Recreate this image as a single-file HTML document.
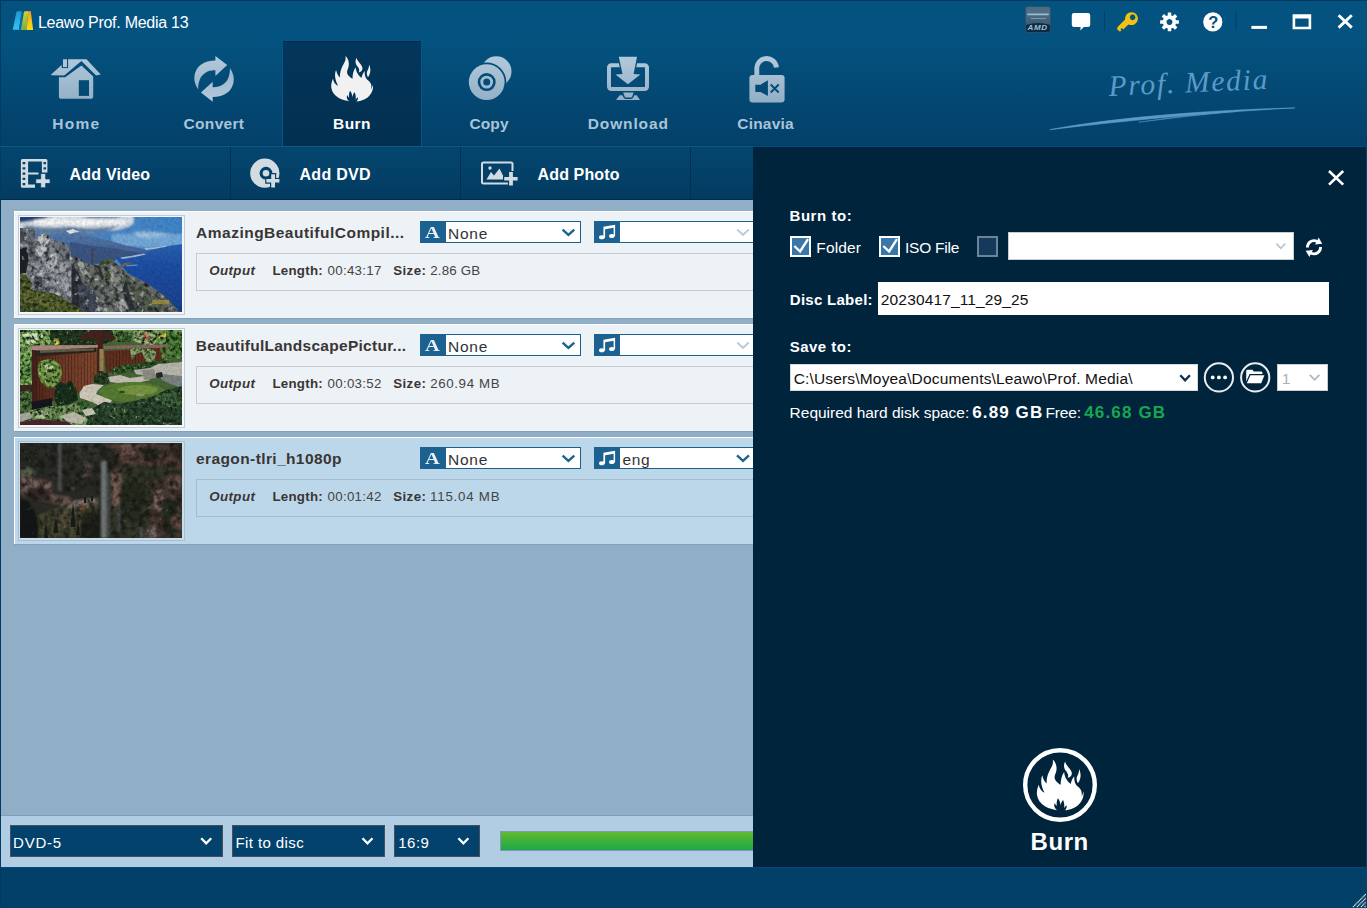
<!DOCTYPE html>
<html lang="en">
<head>
<meta charset="utf-8">
<title>Leawo Prof. Media 13</title>
<style>
*{box-sizing:border-box;margin:0;padding:0}
html,body{width:1367px;height:908px;overflow:hidden;background:#024069}
body{position:relative;font-family:"Liberation Sans",sans-serif;color:#fff;-webkit-font-smoothing:antialiased}
.abs{position:absolute}
.t{position:absolute;white-space:nowrap;line-height:1}
.b{font-weight:bold}
#top{left:0;top:0;width:1367px;height:147px;background:linear-gradient(#04527f 0,#04527f 40px,#034069 146px)}
#burntab{left:283px;top:41px;width:138px;height:105px;background:linear-gradient(#03375b,#022f50);border-top:1px solid #022a47;box-shadow:-1px 0 0 #05558a,1px 0 0 #05558a,0 -1px 0 #05558a}
#toolbar{left:0;top:147px;width:753px;height:53px;background:linear-gradient(#04466f,#033b61)}
.sep{position:absolute;top:147px;width:1px;height:52px;background:#02304f}
#list{left:1px;top:200px;width:752px;height:616px;background:#90aec5}
.card{position:absolute;left:14px;width:739px;height:107px;background:#edf2f6;border-left:1px solid #fff;border-top:1px solid #fff;box-shadow:0 1px 0 #7fa2bd}
.card.sel{background:#bdd7ea}
#bbar{left:1px;top:815px;width:752px;height:52px;background:#b1cde3;border-top:1px solid #7f9db5}
#panel{left:753px;top:147px;width:614px;height:720px;background:#01243d}
#status{left:0;top:867px;width:1367px;height:41px;background:#024069}
.dsel{position:absolute;top:825px;height:32px;background:#02426c;border:1px solid #4a4e58}
.navl{color:#a9c4d8;font-weight:bold;font-size:15px}

.thumbf{position:absolute;left:18px;width:167px;height:100px;background:#f4f7f9;border:1px solid #c3ccd3}
.info{position:absolute;left:196px;width:557px;height:38px;border:1px solid #c6ccd1;border-right:0}
.sub{position:absolute;left:420px;width:161px;height:22px;background:#fff;border:1px solid #1b6290}
.sub i,.aud i{position:absolute;left:0;top:0;width:25px;height:20px;background:#1b6290}
.aud{position:absolute;left:594px;width:159px;height:22px;background:#fff;border:1px solid #1b6290;border-right:0}
.chk{position:absolute;width:21px;height:21px;border:2px solid #fff;background:#3977a8}
.chk.off{border-color:#6c8497;background:#14395a}
</style>
</head>
<body>
<div id="top" class="abs"></div>
<div id="burntab" class="abs"></div>
<div id="toolbar" class="abs"></div>
<div class="sep" style="left:230px"></div><div class="sep" style="left:460px"></div><div class="sep" style="left:690px"></div>
<div id="list" class="abs"></div>
<div class="card" style="top:211px"></div>
<div class="card" style="top:324px"></div>
<div class="card sel" style="top:437px"></div>
<div id="bbar" class="abs"></div>
<div id="status" class="abs"></div>
<div id="panel" class="abs"></div>

<!-- window edge lines -->
<div class="abs" style="left:0;top:0;width:1367px;height:1px;background:#023b61"></div>
<div class="abs" style="left:0;top:0;width:1px;height:908px;background:#023b61"></div>
<div class="abs" style="left:0;top:146px;width:753px;height:1px;background:#0b5883"></div>
<div class="abs" style="left:753px;top:146px;width:614px;height:1px;background:#07497a"></div>
<div class="abs" style="left:0;top:199px;width:753px;height:1px;background:#012b48"></div>

<!-- card 1 -->
<div class="thumbf" style="top:215px"></div>
<div class="info" style="top:253px"></div>
<div class="sub" style="top:221px"><i></i></div>
<div class="aud" style="top:221px"><i></i></div>
<!-- card 2 -->
<div class="thumbf" style="top:328px"></div>
<div class="info" style="top:366px"></div>
<div class="sub" style="top:334px"><i></i></div>
<div class="aud" style="top:334px"><i></i></div>
<!-- card 3 -->
<div class="thumbf" style="top:441px;background:#c9ddec;border-color:#a9bfd0"></div>
<div class="info" style="top:479px;border-color:#a4bccd"></div>
<div class="sub" style="top:447px"><i></i></div>
<div class="aud" style="top:447px"><i></i></div>

<!-- bottom selects -->
<div class="dsel" style="left:10px;width:213px"></div>
<div class="dsel" style="left:232px;width:153px"></div>
<div class="dsel" style="left:394px;width:86px"></div>
<div class="abs" style="left:500px;top:831px;width:253px;height:20px;background:linear-gradient(#62bb30,#3cb13a 50%,#1da84b);border:1px solid #8496bd;border-right:0"></div>

<!-- right panel controls -->
<div class="chk" style="left:790px;top:236px"></div>
<div class="chk" style="left:879px;top:236px"></div>
<div class="chk off" style="left:977px;top:236px"></div>
<div class="abs" style="left:1008px;top:232px;width:286px;height:28px;background:#fff;border:1px solid #c8cdd2"></div>
<div class="abs" style="left:878px;top:282px;width:451px;height:33px;background:#fff"></div>
<div class="abs" style="left:790px;top:364px;width:408px;height:27px;background:#fff;border:1px solid #d5d9dd"></div>
<div class="abs" style="left:1277px;top:364px;width:51px;height:27px;background:#fff;border:1px solid #c8cdd2"></div>

<div class="abs" style="left:1366px;top:147px;width:1px;height:761px;background:#03426c;z-index:3"></div>
<div class="abs" style="left:1px;top:867px;width:1366px;height:1px;background:#04477a"></div>

<svg class="abs" style="left:0;top:0" width="1367" height="908" viewBox="0 0 1367 908">
<defs>
<linearGradient id="ng" x1="0" y1="56" x2="0" y2="102" gradientUnits="userSpaceOnUse"><stop offset="0" stop-color="#b2c9da"/><stop offset="1" stop-color="#92afc6"/></linearGradient>
<linearGradient id="lg1" x1="0" y1="11" x2="0" y2="30" gradientUnits="userSpaceOnUse"><stop offset="0" stop-color="#1c98d4"/><stop offset="1" stop-color="#34c3f2"/></linearGradient>
<linearGradient id="lg2" x1="0" y1="11" x2="0" y2="30" gradientUnits="userSpaceOnUse"><stop offset="0" stop-color="#d2d02c"/><stop offset="1" stop-color="#78ae4a"/></linearGradient>
<linearGradient id="lg3" x1="0" y1="11" x2="0" y2="30" gradientUnits="userSpaceOnUse"><stop offset="0" stop-color="#f09a22"/><stop offset=".5" stop-color="#f4c01c"/><stop offset="1" stop-color="#fadc10"/></linearGradient>
<linearGradient id="amd" x1="0" y1="7" x2="0" y2="33" gradientUnits="userSpaceOnUse"><stop offset="0" stop-color="#4b6b83"/><stop offset=".2" stop-color="#4d6f87"/><stop offset=".65" stop-color="#3c5c74"/><stop offset="1" stop-color="#2c4a62"/></linearGradient>
<mask id="mhome" maskUnits="userSpaceOnUse" x="40" y="50" width="70" height="60">
 <path fill="#fff" d="M51.1 74.6L67.9 59.3H86.5L100.8 74.6L96 75.4H64.4L51.4 75.2Z"/>
 <path fill="#000" d="M64.2 75.6L81.4 60.9L96.1 75.6V80H64.2Z"/>
 <path fill="#fff" d="M58.9 77.3H65.2L81.4 65.6L93.2 76.4V96.2Q93.2 98.8 90.6 98.8H61.5Q58.9 98.8 58.9 96.2Z"/>
 <rect x="61.7" y="57" width="6.4" height="11.1" fill="#000"/>
 <rect x="78.8" y="80.2" width="10.2" height="15.7" fill="#000"/>
</mask>
<mask id="mdl" maskUnits="userSpaceOnUse" x="600" y="50" width="60" height="55">
 <rect x="609" y="65.3" width="38" height="23.7" rx="2.2" fill="none" stroke="#fff" stroke-width="4"/>
 <path fill="#000" d="M617.2 55H638.6L635.2 72.8L643.6 73L627.9 86.2L612.2 73L620.9 72.8Z"/>
 <path fill="#fff" d="M618.8 56.8H637L633.6 73.9L640.4 74.4L627.9 84.2L615.4 74.4L622.5 73.9Z"/>
</mask>
<mask id="mlock" maskUnits="userSpaceOnUse" x="745" y="50" width="45" height="56">
 <rect x="749.4" y="75" width="35.2" height="27.4" rx="3.2" fill="#fff"/>
 <path fill="#000" d="M755.3 84.8H760.5L767.9 80.2V95.9L760.5 91.9H755.3Z"/>
 <path stroke="#000" stroke-width="1.9" d="M770.7 84.5L778.7 92.5M778.7 84.5L770.7 92.5"/>
</mask>
<mask id="mcopy" maskUnits="userSpaceOnUse" x="465" y="50" width="50" height="55">
 <circle cx="496.3" cy="71.4" r="15.2" fill="#fff"/>
 <circle cx="486.7" cy="82.1" r="19.6" fill="#000"/>
 <circle cx="486.7" cy="82.1" r="17.9" fill="#fff"/>
 <circle cx="486.7" cy="82.1" r="9" fill="#000"/>
 <circle cx="486.7" cy="82.1" r="6.4" fill="#fff"/>
 <circle cx="486.7" cy="82.1" r="3.5" fill="#000"/>
</mask>
<path id="flame" d="M480 835C330 830 170 760 150 610C145 550 160 500 178 465C185 520 215 560 262 580C215 500 195 400 228 325C240 380 262 420 292 445C285 330 340 250 375 180C385 150 385 120 380 98C430 140 450 220 425 290C405 340 400 370 420 400C440 430 465 450 495 465C495 400 510 330 545 280C550 340 575 400 640 455C650 410 665 370 692 340C690 400 700 440 730 480C790 520 810 560 800 640C815 610 822 585 826 560C840 640 800 720 740 770C680 815 600 835 560 835C580 810 585 790 582 765C562 775 552 790 545 810C552 760 545 720 530 685C512 700 500 730 492 765C490 720 480 690 455 660C440 690 432 730 440 775C425 765 415 750 410 730C392 765 405 805 440 832ZM560 126C572 188 640 222 656 288C662 328 640 352 598 364C616 322 592 286 564 252C538 216 538 166 560 126ZM762 236C797 300 792 386 745 444C724 402 720 366 738 334C757 304 764 270 762 236Z"/>
</defs>

<!-- app logo -->
<path d="M12.8 29.8L16.5 11.6L21.6 11L19 29.8Z" fill="url(#lg1)"/>
<path d="M19 29.8L21.6 11L23.2 12.4L21 29.8Z" fill="#0a6cab"/>
<path d="M20.9 30L24 11.6L28.2 11L26.7 30Z" fill="url(#lg2)"/>
<path d="M26.7 30L28.2 11L30.8 11.3L33.1 30Z" fill="url(#lg3)"/>

<!-- nav icons -->
<rect x="40" y="50" width="70" height="60" fill="url(#ng)" mask="url(#mhome)"/>
<rect x="63" y="59.3" width="4" height="7.8" fill="#aec6d8"/>
<g fill="url(#ng)">
 <path id="carr" d="M198.2 89.5C195 85 193.8 80 194.5 75.5C196 66 204 60.5 215.4 60.5L215.4 55.9L227.2 65.1L215.4 75.9L215.4 70.3C208 70 202.5 73.5 200 79C198.6 82.5 198 86 198.2 89.5Z"/>
 <use href="#carr" transform="rotate(180 214.05 78.8)"/>
</g>
<use href="#flame" transform="translate(322 50) scale(.06165)" fill="#f1f1f1" fill-rule="evenodd"/>
<rect x="465" y="50" width="50" height="55" fill="url(#ng)" mask="url(#mcopy)"/>
<rect x="600" y="50" width="60" height="55" fill="url(#ng)" mask="url(#mdl)"/>
<path fill="url(#ng)" d="M623.1 92.5H633.6L632.2 96.4Q631.6 97.6 630.2 97.6H626.6Q625.2 97.6 624.6 96.4Z"/>
<path fill="url(#ng)" d="M619.7 95.3H622.4L623.4 97.3Q624.2 99 626 99H630.8Q632.6 99 633.4 97.3L634.3 95.3H636.7L640 100H616Z"/>
<rect x="745" y="50" width="45" height="56" fill="url(#ng)" mask="url(#mlock)"/>
<path fill="none" stroke="url(#ng)" stroke-width="4.9" d="M756.8 75.5V69.4A9.85 9.85 0 0 1 776.4 67.4"/>

<!-- toolbar: add video -->
<g fill="#d3dbe2">
 <path fill-rule="evenodd" d="M22.4 158.9H45.9Q47.4 158.9 47.4 160.4V172.6H41.9V161.4H28.1V172.4H38.5V174.6H28.1V184.5H35V187.8H22.4Q20.9 187.8 20.9 186.3V160.4Q20.9 158.9 22.4 158.9ZM22.6 161.9H25.3V164.3H22.6ZM22.6 167.2H25.3V169.6H22.6ZM22.6 172.4H25.3V174.8H22.6ZM22.6 177.7H25.3V180.1H22.6ZM22.6 182.9H25.3V185.3H22.6ZM43.5 161.9H46V164.3H43.5ZM43.5 167.2H46V169.6H43.5Z"/>
 <path d="M40.7 173.5H45.7V178.9H50.1V183.5H45.7V187.8H40.7V183.5H35.8V178.9H40.7Z" stroke="#043f68" stroke-width=".8"/>
</g>
<!-- toolbar: add dvd -->
<g>
 <circle cx="264.8" cy="173.2" r="14.6" fill="#d3dbe2"/>
 <circle cx="266" cy="173.2" r="6.4" fill="#043f68"/>
 <circle cx="266" cy="173.2" r="3.3" fill="#d3dbe2"/>
 <path d="M270.6 173.6H275.6V178.5H280V183.2H275.6V188H270.6V183.2H265.8V178.5H270.6Z" fill="#d3dbe2" stroke="#043f68" stroke-width="1.2"/>
</g>
<!-- toolbar: add photo -->
<g>
 <rect x="482" y="162.4" width="30.5" height="21.2" rx="1.5" fill="none" stroke="#d3dbe2" stroke-width="2"/>
 <path d="M486.5 179.5L491 172L494 175.5L499.5 168.5L505 179.5Z" fill="#d3dbe2"/>
 <circle cx="490" cy="168" r="1.7" fill="#d3dbe2"/>
 <path d="M508.5 171.5H513.5V176.5H518.2V181H513.5V186H508.5V181H503.6V176.5H508.5Z" fill="#d3dbe2" stroke="#043f68" stroke-width="1.2"/>
</g>

<!-- title bar buttons -->
<rect x="1025.5" y="6.5" width="25" height="26" rx="2.6" fill="url(#amd)" stroke="#2f4f69" stroke-width=".8"/>
<path d="M1026 25Q1038 21.2 1050 25V30Q1050 32 1048 32H1028Q1026 32 1026 30Z" fill="#0d2b45"/>
<rect x="1027.2" y="13.6" width="21.6" height="1.7" rx=".8" fill="#a5c3d6" opacity=".9"/><rect x="1031" y="18" width="15" height="1" fill="#86a6bb" opacity=".8"/>
<path d="M1074 13H1088Q1090.2 13 1090.2 15.2V24.8Q1090.2 27 1088 27H1083.8L1080.4 30.6L1080.6 27H1074Q1071.8 27 1071.8 24.8V15.2Q1071.8 13 1074 13Z" fill="#fff"/>
<rect x="1104" y="11.5" width="1" height="19" fill="#033f67"/>
<rect x="1235.5" y="11.5" width="1" height="19" fill="#033f67"/>
<g fill="#f2c111"><path fill-rule="evenodd" d="M1131.5 12.2A6.4 6.4 0 1 1 1131.49 12.2ZM1132.6 14.6A2.8 2.8 0 1 0 1132.61 14.6Z"/><path d="M1125.8 18.8L1130 23L1123.2 29.4L1121.9 28.1L1120.4 29.6L1121.6 30.8L1119.6 31.6L1117 29.2L1117.6 27Z"/></g>
<g fill="#fff"><rect x="1167.75" y="12.50" width="3.5" height="4.4" rx=".5" transform="rotate(0 1169.5 21.9)"/><rect x="1167.75" y="12.50" width="3.5" height="4.4" rx=".5" transform="rotate(45 1169.5 21.9)"/><rect x="1167.75" y="12.50" width="3.5" height="4.4" rx=".5" transform="rotate(90 1169.5 21.9)"/><rect x="1167.75" y="12.50" width="3.5" height="4.4" rx=".5" transform="rotate(135 1169.5 21.9)"/><rect x="1167.75" y="12.50" width="3.5" height="4.4" rx=".5" transform="rotate(180 1169.5 21.9)"/><rect x="1167.75" y="12.50" width="3.5" height="4.4" rx=".5" transform="rotate(225 1169.5 21.9)"/><rect x="1167.75" y="12.50" width="3.5" height="4.4" rx=".5" transform="rotate(270 1169.5 21.9)"/><rect x="1167.75" y="12.50" width="3.5" height="4.4" rx=".5" transform="rotate(315 1169.5 21.9)"/><path fill-rule="evenodd" d="M1169.5 15.2A6.7 6.7 0 1 1 1169.49 15.2ZM1169.5 18.9A3 3 0 1 0 1169.51 18.9Z"/></g>
<circle cx="1212.8" cy="21.9" r="9.6" fill="#fff"/>
<rect x="1251.4" y="25.9" width="15.6" height="3" fill="#fff"/>
<path d="M1292.6 14.2H1311.2V29.2H1292.6ZM1295.2 18.4V26.7H1308.6V18.4Z" fill="#fff" fill-rule="evenodd"/>
<path d="M1338.6 15.2L1351.8 27.6M1351.8 15.2L1338.6 27.6" stroke="#fff" stroke-width="2.9"/>

<!-- prof media swoosh -->
<path d="M1049.9 129.7C1100 119.8 1190 110.6 1294.8 107.9C1200 113 1110 122.4 1049.9 129.7Z" fill="#5b9bc7" stroke="#5b9bc7" stroke-width=".6"/>
<path d="M1138.8 122.2C1170 117.5 1205 113.5 1237.5 111.3C1205 114.3 1172 118.2 1138.8 122.2Z" fill="#5b9bc7" stroke="#5b9bc7" stroke-width=".5" opacity=".85"/>

<!-- subtitle/audio select icons & chevrons -->
<g id="row1">
 <path d="M562.6 229.6L568.4 234.9L574.3 229.6" fill="none" stroke="#1c6590" stroke-width="2.4"/>
 <path fill="#fff" d="M603.4 226.8L615.1 224.8V236H613.6V227.8L605.1 229.3V237.5H603.4Z"/>
 <ellipse cx="601.8" cy="237.3" rx="2.8" ry="2" fill="#fff"/><ellipse cx="611.8" cy="236.1" rx="2.8" ry="2" fill="#fff"/>
</g>
<use href="#row1" y="113"/><use href="#row1" y="226"/>
<path id="dch" d="M737.2 229.4L743 234.8L748.8 229.4" fill="none" stroke="#b9cfdd" stroke-width="2"/>
<use href="#dch" y="113"/>
<path d="M737 455.4L743 460.9L749 455.4" fill="none" stroke="#1c6590" stroke-width="2.4"/>

<!-- bottom select chevrons -->
<path id="wch" d="M201.2 838.3L206.2 843.4L211.2 838.3" fill="none" stroke="#fff" stroke-width="2.3"/>
<use href="#wch" x="161.3"/><use href="#wch" x="257.2"/>

<!-- panel -->
<path d="M1329 171L1343.2 184.6M1343.2 171L1329 184.6" stroke="#fff" stroke-width="2.6"/>
<path id="ck" d="M794.3 246L800.1 251.5L808 239.2" fill="none" stroke="#fff" stroke-width="2.4"/>
<use href="#ck" x="89"/>
<path d="M1276.4 243.6L1280.8 248.4L1285.2 243.6" fill="none" stroke="#b7c5d1" stroke-width="1.6"/>
<path d="M1309.8 374.8L1314.6 379.8L1319.4 374.8" fill="none" stroke="#a9b8c5" stroke-width="1.7"/>
<path d="M1180.3 375.2L1185.1 380.3L1189.9 375.2" fill="none" stroke="#0f2f4d" stroke-width="2.3"/>
<g fill="#fff">
 <path d="M1306 247.5A8 8 0 0 1 1317.5 240L1318.6 237.4L1322.3 243.8L1315 244.6L1316.2 242.4A5.2 5.2 0 0 0 1308.9 247.5Z"/>
 <path d="M1322 247A8 8 0 0 1 1310.5 254.5L1309.4 257.1L1305.7 250.7L1313 249.9L1311.8 252.1A5.2 5.2 0 0 0 1319.1 247Z"/>
</g>
<circle cx="1218.9" cy="377.4" r="14.1" fill="none" stroke="#e9edf0" stroke-width="2"/>
<circle cx="1212.7" cy="377.4" r="1.9" fill="#fff"/><circle cx="1218.9" cy="377.4" r="1.9" fill="#fff"/><circle cx="1225.1" cy="377.4" r="1.9" fill="#fff"/>
<circle cx="1255.2" cy="377.4" r="14.1" fill="none" stroke="#e9edf0" stroke-width="2"/>
<path d="M1246.2 371.2Q1246.2 369.8 1247.6 369.8H1252.4L1253.8 371.4H1261Q1262.4 371.4 1262.4 372.8V374H1249.6L1246.2 381.6Z" fill="#fff"/>
<path d="M1250.4 375.2H1264.4L1261.2 383.2H1246.8Z" fill="#fff"/>

<!-- burn button -->
<circle cx="1060" cy="785" r="34.8" fill="none" stroke="#fff" stroke-width="4.4"/>
<use href="#flame" transform="translate(1026.6 752.8) scale(.0688)" fill="#fff" fill-rule="evenodd"/>

<!-- resize grip -->
<g stroke="#e3dfda" stroke-width="1.3" stroke-dasharray="1.2 .5"><path d="M1353 907L1366 894M1357 907L1366 898M1361 907L1366 902M1364.6 907L1366 905.6"/></g>
</svg>

<svg class="abs" style="left:20px;top:217px" width="162" height="95" viewBox="0 0 162 95">
<defs>
<filter id="bl1" x="-10%" y="-10%" width="120%" height="120%"><feGaussianBlur stdDeviation="1.1"/></filter>
<filter id="bl2" x="-10%" y="-10%" width="120%" height="120%"><feGaussianBlur stdDeviation="0.6"/></filter>
<filter id="bl3" x="-10%" y="-10%" width="120%" height="120%"><feGaussianBlur stdDeviation="2.2"/></filter>
<filter color-interpolation-filters="sRGB" id="nz" x="0" y="0" width="100%" height="100%"><feTurbulence type="fractalNoise" baseFrequency="0.35" numOctaves="2" seed="3" result="n"/><feColorMatrix type="matrix" values="0 0 0 0 0  0 0 0 0 0  0 0 0 0 0  1.3 0 0 0 -0.45"/></filter>
<filter color-interpolation-filters="sRGB" id="rk" x="0" y="0" width="100%" height="100%"><feGaussianBlur in="SourceGraphic" stdDeviation=".6" result="sg"/><feTurbulence type="fractalNoise" baseFrequency=".2" numOctaves="3" seed="7" result="n"/><feColorMatrix in="n" type="matrix" values="0 0 0 0 .12  0 0 0 0 .13  0 0 0 0 .15  2.6 0 0 0 -1.08" result="d"/><feComposite in="d" in2="sg" operator="in" result="dd"/><feColorMatrix in="n" type="matrix" values="0 0 0 0 .92  0 0 0 0 .93  0 0 0 0 .94  0 -2.4 0 0 .95" result="l"/><feComposite in="l" in2="sg" operator="in" result="ll"/><feMerge><feMergeNode in="sg"/><feMergeNode in="dd"/><feMergeNode in="ll"/></feMerge></filter>
<filter color-interpolation-filters="sRGB" id="vg" x="0" y="0" width="100%" height="100%"><feGaussianBlur in="SourceGraphic" stdDeviation=".6" result="sg"/><feTurbulence type="fractalNoise" baseFrequency=".3" numOctaves="2" seed="11" result="n"/><feColorMatrix in="n" type="matrix" values="0 0 0 0 .1  0 0 0 0 .14  0 0 0 0 .06  2.6 0 0 0 -1.05" result="d"/><feComposite in="d" in2="sg" operator="in" result="dd"/><feColorMatrix in="n" type="matrix" values="0 0 0 0 .75  0 0 0 0 .74  0 0 0 0 .36  0 -2.6 0 0 .98" result="l"/><feComposite in="l" in2="sg" operator="in" result="ll"/><feMerge><feMergeNode in="sg"/><feMergeNode in="dd"/><feMergeNode in="ll"/></feMerge></filter>
<linearGradient id="sky1" x1="0" y1="0" x2="1" y2="0"><stop offset="0" stop-color="#5d83b4"/><stop offset=".6" stop-color="#4a87c6"/><stop offset="1" stop-color="#3f86cb"/></linearGradient>
<linearGradient id="sea1" x1="0" y1="0" x2="0" y2="1"><stop offset="0" stop-color="#2b62b2"/><stop offset=".3" stop-color="#1e50a6"/><stop offset="1" stop-color="#183f8c"/></linearGradient>
<linearGradient id="mt1" x1="0" y1="0" x2="0" y2="1"><stop offset="0" stop-color="#587cae"/><stop offset="1" stop-color="#3b5a8e"/></linearGradient>
<clipPath id="c1"><rect width="162" height="95"/></clipPath>
</defs>
<g clip-path="url(#c1)">
<rect width="162" height="95" fill="url(#sky1)"/>
<g filter="url(#bl1)">
<rect x="92" y="17" width="74" height="13" fill="#86b6e0" opacity=".75"/>
<path d="M-2 -2H112Q118 6 108 10Q96 15 84 13Q70 18 52 13Q40 18 24 14Q10 16 -2 13Z" fill="#d3dce5"/>
<path d="M-2 -2H34Q22 3 10 4Q2 6 -2 5Z" fill="#233f78"/>
<path d="M60 -2H104Q96 2 84 1Q70 3 60 -2Z" fill="#3b5c92" opacity=".8"/>
<path d="M14 3Q30 0 50 3Q70 1 90 3Q104 2 108 6Q98 9 84 7Q60 10 40 7Q24 9 14 7Z" fill="#f5f7f9"/>
<path d="M6 8.5Q30 12.5 50 9.5Q70 13.5 100 8.5Q88 15.5 66 15.5Q48 18.5 30 15.5Q16 16.5 2 13Z" fill="#64809f"/>
<path d="M112 15Q130 13 152 17Q140 21 120 21Z" fill="#a9c8e4" opacity=".8"/>
</g>
<g filter="url(#bl2)">
<path d="M14 16Q30 20 46 14L53 12Q62 16 74 20Q92 24 104 28Q118 31 128 33L146 29Q138 34 124 37Q110 40 98 41L92 46H14Z" fill="url(#mt1)"/>
<path d="M46 14L53 12L60 15Q54 15 50 17Z" fill="#dfe6ee"/>
<path d="M50 25Q70 29 92 31Q110 35 124 36.5Q112 40 98 41L90 47H50Z" fill="#38547f" opacity=".85"/>
<path d="M96 41Q112 39 126 35Q138 32 148 29L162 27V95H160Q146 80 128 67Q116 60 108 57Z" fill="url(#sea1)"/>
<path d="M100 40.5Q112 39 124 36.5L126 37.5Q114 40.5 102 42Z" fill="#a9bbd4"/>
<path d="M124 31Q136 30.5 146 28.5L147 29.5Q136 32 126 33Z" fill="#b9cbe0" opacity=".8"/>
<path d="M106 48L118 47.5L117 48.8L107 49.2Z" fill="#9fb4d0" opacity=".7"/>
</g>
<g filter="url(#rk)">
<path d="M50 41L56 39.5L66 46L76 49L86 44L92.5 43L100 50L108.5 57L128 67L146 80L160 95H50Z" fill="#6a7069"/>
<path d="M51 46Q60 56 64 70Q72 80 80 95H51Z" fill="#2b3037"/>
<path d="M58 68Q66 66 72 72Q80 78 82 95H60Z" fill="#464e5c"/>
<path d="M56 42L62 44L66 52L72 62L68 64L60 54Z" fill="#a3a7a4"/>
<path d="M82 52L92 48L100 56L104 72L98 78L88 66Z" fill="#878b84"/>
<path d="M84 56L90 54L92 60L86 64Z" fill="#4e5c3a"/>
<path d="M100 58L112 62L126 72L140 86L146 95H112L104 78Z" fill="#5c6356"/>
<path d="M106 62L110 80L116 92L110 94L102 74Z" fill="#30363a"/>
<path d="M96 82L104 82L108 92L98 94Z" fill="#9ea19e"/>
<path d="M76 80L84 84L90 95H78Z" fill="#858a87"/>
<path d="M78 44L92 41.5L94 45L84 49Z" fill="#526140"/>
<path d="M120 76L134 82L146 95H128Z" fill="#5a6450"/>
</g>
<g filter="url(#bl2)">
<rect x="71.5" y="31" width="1.6" height="17" fill="#4a4340"/>
<path d="M72 47L80 49L84 62L82 64L78 52Z" fill="#33302f"/>
<path d="M96 52L104 46L112 45L110 47L104 49L100 54Z" fill="#6b625c"/>
<rect x="132" y="83" width="17" height="4" fill="#a59a3c" opacity=".75"/>
</g>
<g filter="url(#rk)">
<path d="M0 11.4L12 11L15 14V22L19 18L26 16L32 22L44 26L50 32L51.5 41V86L35 77L10 72L0 60Z" fill="#858b91"/>
<path d="M0 11.4L12 11L15 14V22L10 26L0 28Z" fill="#697079"/>
<path d="M0 32L7 30L8.5 42L6 56L0 57Z" fill="#1d2124"/>
<path d="M19 18L26 16L30 22L26 34L20 40L16 34Z" fill="#c3c7ca"/>
<path d="M30 22L44 26L50 32L51 41L46 44L38 36Z" fill="#747a82"/>
<path d="M26 40L36 36L38 46L30 52L24 48Z" fill="#b6babd"/>
<path d="M10 50L24 48L26 56L12 62Z" fill="#a5a9ae"/>
<path d="M12 62L28 58L30 72L16 70Z" fill="#80868c"/>
<path d="M30 52L42 46L51 50V82L40 74L32 64Z" fill="#a0a4a9"/>
<path d="M14 60L22 60L22 70L15 70Z" fill="#535960"/>
<path d="M8 28L14 24L16 44L10 48Z" fill="#6a7077"/>
</g>
<g filter="url(#vg)">
<path d="M0 57L6 58L12 66L10 72L35 77L51 86L58 90L64 95H0Z" fill="#55602f"/>
<path d="M4 76Q16 72 28 80Q38 82 44 90L30 95H4Z" fill="#6e753c" opacity=".7"/>
<path d="M0 62L8 64L10 70L0 72Z" fill="#4a5a30"/>
<path d="M0 86Q14 84 26 90L30 95H0Z" fill="#46542a"/>
</g>
<rect width="162" height="95" filter="url(#nz)" opacity=".2"/>
</g>
</svg>

<svg class="abs" style="left:20px;top:330px" width="162" height="95" viewBox="0 0 162 95">
<defs><clipPath id="c2"><rect width="162" height="95"/></clipPath>
<linearGradient id="fn1" x1="0" y1="0" x2="1" y2="0"><stop offset="0" stop-color="#4e241a"/><stop offset=".45" stop-color="#6f3a28"/><stop offset="1" stop-color="#80482f"/></linearGradient>
<pattern id="plk" width="3.2" height="10" patternUnits="userSpaceOnUse"><rect width="3.2" height="10" fill="none"/><rect x="0" width=".8" height="10" fill="#2a120c" opacity=".45"/></pattern>
<filter color-interpolation-filters="sRGB" id="lf" x="0" y="0" width="100%" height="100%"><feGaussianBlur in="SourceGraphic" stdDeviation=".7" result="sg"/><feTurbulence type="fractalNoise" baseFrequency=".28" numOctaves="3" seed="5" result="n"/><feColorMatrix in="n" type="matrix" values="0 0 0 0 .07  0 0 0 0 .13  0 0 0 0 .06  2.8 0 0 0 -1.1" result="d"/><feComposite in="d" in2="sg" operator="in" result="dd"/><feColorMatrix in="n" type="matrix" values="0 0 0 0 .78  0 0 0 0 .88  0 0 0 0 .62  0 -2.8 0 0 1.0" result="l"/><feComposite in="l" in2="sg" operator="in" result="ll"/><feMerge><feMergeNode in="sg"/><feMergeNode in="dd"/><feMergeNode in="ll"/></feMerge></filter>
</defs>
<g clip-path="url(#c2)">
<rect width="162" height="95" fill="#466538"/>
<g filter="url(#lf)">
<path d="M0 0H34L30 14L14 18L10 40L14 56L0 58Z" fill="#86b860"/>
<path d="M2 4Q14 0 24 6Q20 12 8 14Z" fill="#cfe8b8"/>
<path d="M0 26Q8 30 10 44Q6 52 0 54Z" fill="#6fa54c"/>
<path d="M30 0H96L92 12L74 16L40 15L30 10Z" fill="#263c22"/>
<path d="M92 0H162V30L150 26L132 10L112 8L96 10Z" fill="#6f9a50"/>
<path d="M112 2Q124 0 134 4Q140 10 132 16Q120 14 112 10Z" fill="#a0bd82"/>
<path d="M122 4L128 3L130 10L124 11Z" fill="#c9785a"/>
<path d="M138 3L146 2L146 7L139 8Z" fill="#e0cf4a"/>
<path d="M146 2Q160 4 162 10V28L152 24L146 14Z" fill="#4a8436"/>
<path d="M96 2Q104 0 112 4L110 12L98 12Z" fill="#3d6230"/>
<path d="M33 10L38 8L40 14L35 15Z" fill="#e8df58"/>
</g>
<g filter="url(#bl2)">
<path d="M84 21L150 17.5V29L128 34L104 38L86 44Z" fill="#633020"/>
<path d="M84 21L150 17.5V29L128 34L104 38L86 44Z" fill="url(#plk)"/>
<path d="M84 16L118 15L150 14.5V17.5L84 19Z" fill="#8a675e"/>
<path d="M60 7Q68 0 78 0Q88 1 96.5 8L94 10Q80 7 62 10Z" fill="#45211a"/>
<rect x="76.6" y="8" width="6.2" height="37" fill="#47221a"/>
<rect x="79.4" y="19" width="4" height="22" fill="#c9b46a" opacity=".65"/>
<path d="M12 27L76.6 21.5V49.5L59.4 63L32 71.6L12 74Z" fill="url(#fn1)"/>
<path d="M12 27L76.6 21.5V49.5L59.4 63L32 71.6L12 74Z" fill="url(#plk)"/>
<path d="M14 18L76 17V22L14 27Z" fill="#33241d"/>
<path d="M20 19.5L74 18.5V20.5L20 23Z" fill="#7f8f6a" opacity=".55"/>
<path d="M6.5 18.5L14 15.5L78 15V17.5L15 20.5Z" fill="#b08a82"/>
<rect x="12" y="20" width="3.4" height="54" fill="#42201a"/>
<path d="M0 55H12V62H0Z" fill="#3c2822"/>
<path d="M11 72L32 68V76L12 82Z" fill="#16191e"/>
</g>
<g filter="url(#lf)">
<path d="M110 20Q118 14 124 20Q130 16 136 22L134 34L126 32L122 22L116 24L112 30Z" fill="#8fb474" opacity=".9"/>
<path d="M140 18L150 16L152 30L142 30Z" fill="#5f9046" opacity=".85"/>
<path d="M19 32Q26 28 34 30Q42 34 42 44Q40 54 32 58Q24 58 20 50Q16 42 19 32Z" fill="#7fb052" opacity=".9"/>
<path d="M24 34Q30 32 34 36Q32 42 26 42Z" fill="#bfdc96" opacity=".9"/>
<path d="M35 56L40 52L46 54L50 50L56 58L58 70L50 74L38 76L34 70Z" fill="#1b3320"/>
<path d="M74 46Q80 40 88 44Q92 50 88 54Q80 56 74 52Z" fill="#2a4628"/>
<path d="M90 40Q100 34 112 34Q128 32 148 30L150 36Q130 38 118 40Q104 44 92 44Z" fill="#38602e"/>
</g>
<g filter="url(#bl2)">
<path d="M59.4 63L64 56L72 54L84 55L78 60L76 64L92 70L90 74L80 76L72 72L60 68Z" fill="#cfcaba"/>
<path d="M88 47L100 45L110 48L124 46L130 50L112 54L98 53L90 52Z" fill="#c4c0b2"/>
<path d="M114 40L130 38L138 34L162 32V58L154 54L142 50L140 44L126 46L116 44Z" fill="#b9b8ae"/>
<path d="M122 40L134 39L136 48L124 50Z" fill="#8f8c84"/>
<path d="M142 44L162 46V58L150 54L142 50Z" fill="#7b8380"/>
<path d="M136 43L142 42L143 47L137 48Z" fill="#25282a"/>
<ellipse cx="112" cy="62" rx="33" ry="10" fill="#577a30"/>
<ellipse cx="118" cy="60" rx="20" ry="5" fill="#74943f"/>
<ellipse cx="102" cy="62" rx="3" ry="1.2" fill="#2d4a20"/><ellipse cx="120" cy="65" rx="4" ry="1.4" fill="#8c9a74"/>
</g>
<g filter="url(#lf)">
<path d="M66 95L70 80L84 72L100 74L118 70L134 66L146 60L162 56V95Z" fill="#2e4b34"/>
<path d="M132 68Q146 58 162 62V80Q146 78 132 68Z" fill="#416641"/>
<path d="M86 78Q100 74 110 82Q100 88 88 86Z" fill="#40603e"/>
<path d="M0 62L10 60L12 82L0 84Z" fill="#52753f"/>
<path d="M12 80L30 76L46 76L58 72L66 74L70 80L66 95H0V84Z" fill="#789a5e"/>
<path d="M14 82Q22 78 28 82Q30 88 22 90Q14 90 14 82Z" fill="#adc796"/>
<path d="M58 74L66 70L70 76L62 80Z" fill="#3d6a34"/>
</g>
<g filter="url(#bl2)">
<path d="M40 86L54 82L66 88L62 94L48 92Z" fill="#bdb9aa"/>
<path d="M62 80L72 78L76 84L66 86Z" fill="#c8c5b8"/>
<path d="M0 84L10 82L12 88L0 92Z" fill="#a9a8a0"/>
<path d="M0 92L20 89L48 92L52 95H0Z" fill="#48282a"/>
</g>
<rect width="162" height="95" filter="url(#nz)" opacity=".2"/>
</g>
</svg>

<svg class="abs" style="left:20px;top:443px" width="162" height="95" viewBox="0 0 162 95">
<defs><clipPath id="c3"><rect width="162" height="95"/></clipPath>
<filter color-interpolation-filters="sRGB" id="dk" x="0" y="0" width="100%" height="100%"><feGaussianBlur in="SourceGraphic" stdDeviation="1" result="sg"/><feTurbulence type="fractalNoise" baseFrequency=".16" numOctaves="3" seed="9" result="n"/><feColorMatrix in="n" type="matrix" values="0 0 0 0 .09  0 0 0 0 .08  0 0 0 0 .07  2.0 0 0 0 -0.72" result="d"/><feComposite in="d" in2="sg" operator="in" result="dd"/><feColorMatrix in="n" type="matrix" values="0 0 0 0 .62  0 0 0 0 .52  0 0 0 0 .48  0 -1.6 0 0 .52" result="l"/><feComposite in="l" in2="sg" operator="in" result="ll"/><feMerge><feMergeNode in="sg"/><feMergeNode in="dd"/><feMergeNode in="ll"/></feMerge></filter>
</defs>
<g clip-path="url(#c3)">
<rect width="162" height="95" fill="#2a2b25"/>
<g filter="url(#dk)">
<path d="M0 0H100V20L92 30L88 50L78 52L70 40L56 50L44 48L36 36L20 30L0 26Z" fill="#2a2d27"/>
<path d="M46 0H80L78 14L70 26L62 22L56 12Z" fill="#34362e"/>
<path d="M64 20L72 22L70 34L64 32Z" fill="#50463f"/>
<path d="M82 0H162V26L140 24L118 22L100 24L98 10Z" fill="#4f3d36"/>
<path d="M100 2L112 0L116 10L112 20L102 20Z" fill="#6a5249"/>
<path d="M120 6Q132 2 144 8Q140 18 126 18Z" fill="#2a2f22"/>
<path d="M150 0H162V18L152 14Z" fill="#3c302a"/>
<path d="M92 26L104 22L130 23L162 26V95H84L88 60Z" fill="#33382a"/>
<path d="M91 30L100 24L102 40L100 60L96 70L90 56Z" fill="#755c52"/>
<path d="M102 40Q116 36 128 44Q126 64 116 78Q104 80 100 64Z" fill="#272e20"/>
<path d="M132 40L148 32L162 30V95H126L130 70Z" fill="#473a33"/>
<path d="M134 50L142 46L146 62L140 70L134 64Z" fill="#806862"/>
<path d="M146 36L162 32V44L150 48Z" fill="#65504a"/>
<path d="M142 60Q152 52 158 60V90H144Z" fill="#252d20"/>
<path d="M126 86L134 82L138 95H124Z" fill="#7a6a64"/>
<path d="M150 74L162 70V88L152 84Z" fill="#6c544c"/>
<path d="M0 33L10 34L18 36L30 38L34 44L30 50L36 52L50 54L52 60L40 62L24 58L8 56L0 50Z" fill="#66524c"/>
<path d="M2 36L16 36L18 44L6 46Z" fill="#856e68"/>
<path d="M20 38L32 40L32 46L22 46Z" fill="#7c655f"/>
<path d="M8 44L28 46L30 56L14 58L6 54Z" fill="#332a25"/>
<path d="M0 26L10 24L16 30L12 34L0 33Z" fill="#565f4a"/>
<path d="M40 62L52 58L66 56L78 55L78 60L64 66L48 70Z" fill="#80766a"/>
<path d="M18 72L40 64L64 66L78 60V70L66 80L60 95H18Z" fill="#474933"/>
<path d="M36 70L52 68L50 80L40 86Z" fill="#59553e"/>
<path d="M0 56L8 58L14 68L18 80V95H0Z" fill="#121718"/>
<path d="M62 72L80 66V95H60Z" fill="#1f241c"/>
</g>
<g filter="url(#bl2)">
<path d="M60 64.5L64.5 63.5L63.5 66.5L60 67Z" fill="#8e422c" opacity=".8"/>
<path d="M36 74L38.5 90H33.5Z M26 80L28 95H24Z M53 58L55.5 84H50.5Z M58 78L60 92H56Z" fill="#141a18"/>
<rect x="64" y="54" width="2" height="6" fill="#15171a"/><rect x="71" y="53" width="2" height="5" fill="#1a1c1e"/>
</g>
<g filter="url(#bl1)">
<rect x="38" y="0" width="3.6" height="48" fill="#585d5d" opacity=".8"/>
<rect x="81" y="18" width="5.6" height="77" fill="#7b8282" opacity=".85"/>
<rect x="86.5" y="30" width="3.6" height="65" fill="#4a5050" opacity=".8"/>
<rect x="98" y="60" width="2" height="30" fill="#535b5b" opacity=".7"/>
<rect x="120" y="84" width="2.4" height="11" fill="#6a7171" opacity=".8"/>
</g>
<rect width="162" height="95" filter="url(#nz)" opacity=".18"/>
</g>
</svg>

<span class="t" style="left:37.96px;top:15.26px;font-size:16px;color:#fff;letter-spacing:-0.260px">Leawo Prof. Media 13</span>
<span class="t" style="left:52.33px;top:115.58px;font-size:15.5px;color:#a9c4d8;letter-spacing:1.281px;font-weight:bold">Home</span>
<span class="t" style="left:183.55px;top:115.58px;font-size:15.5px;color:#a9c4d8;letter-spacing:0.317px;font-weight:bold">Convert</span>
<span class="t" style="left:333.04px;top:115.58px;font-size:15.5px;color:#fff;letter-spacing:0.443px;font-weight:bold">Burn</span>
<span class="t" style="left:469.55px;top:115.58px;font-size:15.5px;color:#a9c4d8;letter-spacing:0.067px;font-weight:bold">Copy</span>
<span class="t" style="left:587.73px;top:115.58px;font-size:15.5px;color:#a9c4d8;letter-spacing:0.882px;font-weight:bold">Download</span>
<span class="t" style="left:737.31px;top:115.58px;font-size:15.5px;color:#a9c4d8;letter-spacing:0.202px;font-weight:bold">Cinavia</span>
<span class="t" style="left:69.56px;top:167.16px;font-size:16px;color:#fff;letter-spacing:0.213px;font-weight:bold">Add Video</span>
<span class="t" style="left:299.56px;top:167.16px;font-size:16px;color:#fff;letter-spacing:0.271px;font-weight:bold">Add DVD</span>
<span class="t" style="left:537.60px;top:167.16px;font-size:16px;color:#fff;letter-spacing:0.118px;font-weight:bold">Add Photo</span>
<span class="t" style="left:196.12px;top:224.68px;font-size:15.5px;color:#3a3535;letter-spacing:0.484px;font-weight:bold">AmazingBeautifulCompil...</span>
<span class="t" style="left:195.72px;top:337.68px;font-size:15.5px;color:#3a3535;letter-spacing:0.271px;font-weight:bold">BeautifulLandscapePictur...</span>
<span class="t" style="left:196.09px;top:450.68px;font-size:15.5px;color:#3a3535;letter-spacing:0.389px;font-weight:bold">eragon-tlri_h1080p</span>
<span class="t" style="left:209.28px;top:264.34px;font-size:13.3px;color:#3a3535;letter-spacing:0.404px;font-weight:bold;font-style:italic">Output</span>
<span class="t" style="left:272.40px;top:264.34px;font-size:13.3px;color:#3a3535;letter-spacing:0.271px;font-weight:bold">Length:</span>
<span class="t" style="left:327.57px;top:264.34px;font-size:13.3px;color:#444;letter-spacing:0.283px">00:43:17</span>
<span class="t" style="left:393.19px;top:264.34px;font-size:13.3px;color:#3a3535;letter-spacing:0.409px;font-weight:bold">Size:</span>
<span class="t" style="left:430.29px;top:264.34px;font-size:13.3px;color:#444;letter-spacing:0.166px">2.86 GB</span>
<span class="t" style="left:448.12px;top:225.78px;font-size:15.5px;color:#333;letter-spacing:0.712px">None</span>
<span class="t" style="left:209.28px;top:377.34px;font-size:13.3px;color:#3a3535;letter-spacing:0.404px;font-weight:bold;font-style:italic">Output</span>
<span class="t" style="left:272.40px;top:377.34px;font-size:13.3px;color:#3a3535;letter-spacing:0.271px;font-weight:bold">Length:</span>
<span class="t" style="left:327.57px;top:377.34px;font-size:13.3px;color:#444;letter-spacing:0.283px">00:03:52</span>
<span class="t" style="left:393.19px;top:377.34px;font-size:13.3px;color:#3a3535;letter-spacing:0.409px;font-weight:bold">Size:</span>
<span class="t" style="left:430.29px;top:377.34px;font-size:13.3px;color:#444;letter-spacing:0.614px">260.94 MB</span>
<span class="t" style="left:448.12px;top:338.78px;font-size:15.5px;color:#333;letter-spacing:0.712px">None</span>
<span class="t" style="left:209.28px;top:490.34px;font-size:13.3px;color:#3a3535;letter-spacing:0.404px;font-weight:bold;font-style:italic">Output</span>
<span class="t" style="left:272.40px;top:490.34px;font-size:13.3px;color:#3a3535;letter-spacing:0.271px;font-weight:bold">Length:</span>
<span class="t" style="left:327.57px;top:490.34px;font-size:13.3px;color:#444;letter-spacing:0.283px">00:01:42</span>
<span class="t" style="left:393.19px;top:490.34px;font-size:13.3px;color:#3a3535;letter-spacing:0.409px;font-weight:bold">Size:</span>
<span class="t" style="left:430.11px;top:490.34px;font-size:13.3px;color:#444;letter-spacing:0.761px">115.04 MB</span>
<span class="t" style="left:448.12px;top:451.78px;font-size:15.5px;color:#333;letter-spacing:0.712px">None</span>
<span class="t" style="left:622.54px;top:451.78px;font-size:15.5px;color:#333;letter-spacing:0.578px">eng</span>
<span class="t" style="left:789.51px;top:208.20px;font-size:15px;color:#fff;letter-spacing:0.548px;font-weight:bold">Burn to:</span>
<span class="t" style="left:816.31px;top:239.58px;font-size:15.5px;color:#fff;letter-spacing:0.138px">Folder</span>
<span class="t" style="left:905.00px;top:239.58px;font-size:15.5px;color:#fff;letter-spacing:-0.248px">ISO File</span>
<span class="t" style="left:789.81px;top:292.00px;font-size:15px;color:#fff;letter-spacing:0.276px;font-weight:bold">Disc Label:</span>
<span class="t" style="left:880.86px;top:291.58px;font-size:15.5px;color:#111;letter-spacing:0.136px">20230417_11_29_25</span>
<span class="t" style="left:789.72px;top:339.20px;font-size:15px;color:#fff;letter-spacing:0.481px;font-weight:bold">Save to:</span>
<span class="t" style="left:793.65px;top:371.08px;font-size:15.5px;color:#111;letter-spacing:0.171px">C:\Users\Moyea\Documents\Leawo\Prof. Media\</span>
<span class="t" style="left:1281.69px;top:371.08px;font-size:15.5px;color:#a9b0b6;letter-spacing:0.000px">1</span>
<span class="t" style="left:789.61px;top:404.68px;font-size:15.5px;color:#fff;letter-spacing:-0.018px">Required hard disk space:</span>
<span class="t" style="left:972.27px;top:404.41px;font-size:17px;color:#fff;letter-spacing:1.102px;font-weight:bold">6.89 GB</span>
<span class="t" style="left:1045.47px;top:404.68px;font-size:15.5px;color:#fff;letter-spacing:-0.172px">Free:</span>
<span class="t" style="left:1084.13px;top:404.41px;font-size:17px;color:#16a750;letter-spacing:1.178px;font-weight:bold">46.68 GB</span>
<span class="t" style="left:1030.61px;top:830.48px;font-size:24px;color:#fff;letter-spacing:0.512px;font-weight:bold">Burn</span>
<span class="t" style="left:13.07px;top:835.20px;font-size:15px;color:#fff;letter-spacing:0.761px">DVD-5</span>
<span class="t" style="left:235.39px;top:835.20px;font-size:15px;color:#fff;letter-spacing:0.419px">Fit to disc</span>
<span class="t" style="left:398.20px;top:835.20px;font-size:15px;color:#fff;letter-spacing:0.505px">16:9</span>
<span class="t" style="left:424.6px;top:223.6px;font-family:'Liberation Serif',serif;font-weight:bold;font-size:17px;color:#e9eff4;transform:scaleX(1.2);transform-origin:0 0">A</span>
<span class="t" style="left:424.6px;top:336.6px;font-family:'Liberation Serif',serif;font-weight:bold;font-size:17px;color:#e9eff4;transform:scaleX(1.2);transform-origin:0 0">A</span>
<span class="t" style="left:424.6px;top:449.6px;font-family:'Liberation Serif',serif;font-weight:bold;font-size:17px;color:#e9eff4;transform:scaleX(1.2);transform-origin:0 0">A</span>
<span class="t b" style="left:1208.2px;top:13.6px;font-size:16.5px;color:#04517e">?</span>
<span class="t b" style="left:1027.6px;top:24.4px;font-size:8px;font-style:italic;color:#a3c0d1;letter-spacing:.6px">AMD</span>
<span class="t" style="left:1108.5px;top:72.3px;font-family:'Liberation Serif',serif;font-style:italic;font-size:29.5px;color:#5b9bc7;letter-spacing:1.75px;transform:rotate(-2.6deg);transform-origin:0 24.7px">Prof. Media</span>

</body>
</html>
